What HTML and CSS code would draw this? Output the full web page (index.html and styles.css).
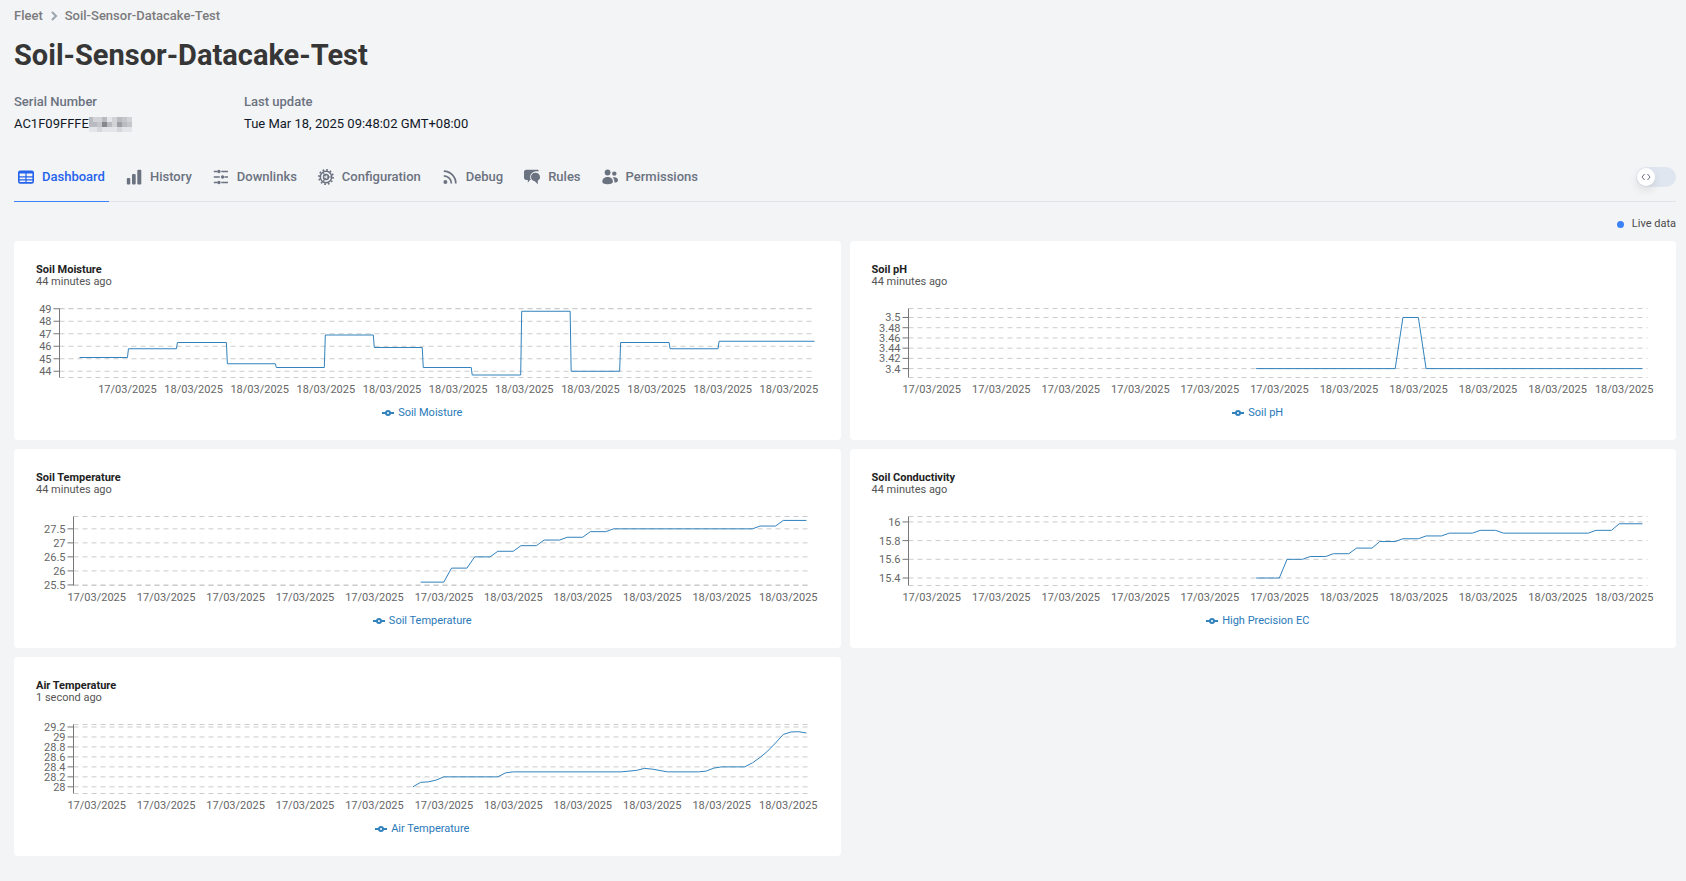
FILE: index.html
```html
<!DOCTYPE html>
<html lang="en">
<head>
<meta charset="utf-8">
<meta name="viewport" content="width=device-width, initial-scale=1">
<title>Soil-Sensor-Datacake-Test</title>
<link rel="stylesheet" href="styles.css">
</head>
<body>
<div class="page">
  <nav class="breadcrumb" aria-label="Breadcrumb">
    <a href="#">Fleet</a>
    <svg class="crumb-icon" viewBox="0 0 8 10" aria-hidden="true"><path d="M2 1l4 4-4 4"/></svg>
    <a href="#">Soil-Sensor-Datacake-Test</a>
  </nav>

  <h1 class="title">Soil-Sensor-Datacake-Test</h1>

  <dl class="meta">
    <div class="meta-item">
      <dt>Serial Number</dt>
      <dd>AC1F09FFFE<svg class="redacted" viewBox="0 0 43 15" shape-rendering="crispEdges" aria-hidden="true">
        <rect width="43" height="15" fill="#d2d3d7"/>
        <path fill="#b9bbc1" d="M0 0h4v10H0zM13 0h5v5h-5zM28 0h5v5h-5zM4 5h4v5H4zM18 5h5v5h-5zM33 5h5v5h-5z"/>
        <path fill="#c5c6cb" d="M8 5h5v5H8zM38 5h5v5h-5zM33 0h5v5h-5z"/>
        <path fill="#85888f" d="M13 5h5v5h-5z"/>
        <path fill="#9c9ea4" d="M28 5h5v5h-5z"/>
        <path fill="#e4e5e9" d="M0 10h43v5H0zM18 0h5v5h-5z"/>
        <path fill="#d6d7dc" d="M8 10h5v5H8zM28 10h5v5h-5z"/>
      </svg></dd>
    </div>
    <div class="meta-item">
      <dt>Last update</dt>
      <dd>Tue Mar 18, 2025 09:48:02 GMT+08:00</dd>
    </div>
  </dl>

  <div class="tabbar">
    <nav class="tabs" aria-label="Device sections">
      <a class="tab tab-active" href="#" aria-current="page">
        <svg viewBox="0 0 16 16" aria-hidden="true"><rect x=".8" y="2.300" width="14.400" height="11.600" rx="1.400" fill="none" stroke="currentColor" stroke-width="1.600"/><path d="M1 3h14v1.500H1z"/><path d="M8 4v9.500M1 7.800h14M1 10.900h14" fill="none" stroke="currentColor" stroke-width="1.200"/></svg>
        Dashboard</a>
      <a class="tab" href="#">
        <svg viewBox="0 0 16 16" aria-hidden="true"><rect x=".8" y="9" width="3.500" height="6.500" rx="1"/><rect x="6" y="5" width="3.700" height="10.500" rx="1"/><rect x="11.300" y=".8" width="4" height="14.700" rx="1"/></svg>
        History</a>
      <a class="tab" href="#">
        <svg viewBox="0 0 16 16" aria-hidden="true"><path d="M.8 2.500h3.500M8.300 2.500H15M.8 8h6M11.500 8H15M.8 13.500h3.500M8.300 13.500H15" fill="none" stroke="currentColor" stroke-width="1.300"/><circle cx="5.900" cy="2.500" r="1.700"/><circle cx="9.600" cy="8" r="1.700"/><circle cx="5.900" cy="13.500" r="1.700"/></svg>
        Downlinks</a>
      <a class="tab" href="#">
        <svg viewBox="0 0 16 16" aria-hidden="true"><g fill="none" stroke="currentColor"><circle cx="8" cy="8" r="5.700" stroke-width="1.500"/><circle cx="8" cy="8" r="7.100" stroke-width="1.700" stroke-dasharray="1.700 2.018"/><circle cx="8" cy="8" r="2.500" stroke-width="1.400"/><path d="M8.800 8h4.500M7.500 7.200L5.200 3.500M7.500 8.800l-2.300 3.700" stroke-width="1.100"/></g></svg>
        Configuration</a>
      <a class="tab" href="#">
        <svg viewBox="0 0 16 16" aria-hidden="true"><circle cx="3.400" cy="13" r="2"/><path d="M1.800 6.800a7.600 7.600 0 0 1 7.600 7.800M1.800 2.200a12.200 12.200 0 0 1 12 12.400" fill="none" stroke="currentColor" stroke-width="1.700"/></svg>
        Debug</a>
      <a class="tab" href="#">
        <svg viewBox="0 0 16 16" aria-hidden="true"><path d="M2.200.8h11c1 0 1.700.7 1.700 1.500C10 2 6.200 4 6.200 8c0 1.400.3 2.200.7 3H6l-2.200 2.800V11H2.200C1 11 0 10 0 8.800V3C0 1.800 1 .8 2.200.8z"/><path d="M11.300 3.700c2.900 0 4.700 1.800 4.700 4.200 0 1.700-.8 3-2.200 3.700v3.700L10.500 12C8.500 11.700 7 10.100 7 7.900c0-2.400 1.700-4.200 4.300-4.200z"/></svg>
        Rules</a>
      <a class="tab" href="#">
        <svg viewBox="0 0 16 16" aria-hidden="true"><circle cx="5.600" cy="3.500" r="2.900"/><circle cx="12.300" cy="4.600" r="2.200"/><path d="M.3 12.800C.3 9.500 2.600 8 5.600 8s5.300 1.500 5.300 4.800c0 1.600-1.600 2.500-5.300 2.500S.3 14.400.3 12.800z"/><path d="M10.700 8.600c.5-.3 1-.4 1.600-.4 2.200 0 3.700 1.200 3.700 3.200 0 1.300-1.300 2-3.600 2.100.2-2-.4-3.700-1.700-4.900z"/></svg>
        Permissions</a>
    </nav>
    <label class="switch">
      <input type="checkbox" role="switch" aria-label="Developer mode">
      <span class="knob"><svg viewBox="0 0 10 8" aria-hidden="true"><path d="M3.500 1L1 4l2.500 3M6.500 1L9 4 6.500 7"/></svg></span>
    </label>
  </div>

  <p class="live"><span class="live-dot"></span>Live data</p>

  <main class="grid" id="grid"></main>
</div>
<script src="charts.js"></script>
</body>
</html>
```
FILE: styles.css
```css
* { box-sizing: border-box; }

body {
  margin: 0;
  background: #f3f4f6;
  color: #111827;
  font-family: Roboto, "Liberation Sans", sans-serif;
  font-size: 13px;
  line-height: 16px;
}

a { color: inherit; text-decoration: none; }

.page { padding: 8px 10px 24px 14px; }

.breadcrumb {
  display: flex;
  align-items: center;
  gap: 7px;
  color: #7b7b7d;
  font-weight: 500;
}
.crumb-icon {
  width: 8px;
  height: 10px;
  fill: none;
  stroke: #9ca3af;
  stroke-width: 2;
}

.title {
  margin: 13px 0 21px;
  color: #363636;
  font-size: 29px;
  font-weight: 700;
  line-height: 36px;
}

.meta { display: flex; margin: 0; }
.meta-item { width: 230px; white-space: nowrap; }
.meta dt { color: #6b7280; font-weight: 500; }
.meta dd { display: flex; align-items: center; margin: 6px 0 0; }
.redacted { width: 43px; height: 15px; }

.tabbar {
  display: flex;
  align-items: center;
  justify-content: space-between;
  margin-top: 20px;
  border-bottom: 1px solid #e2e4e8;
}
.tabs { display: flex; gap: 13px; margin-bottom: -1px; }
.tab {
  display: flex;
  align-items: center;
  gap: 8px;
  padding: 17px 4px 16px;
  border-bottom: 1px solid transparent;
  color: #6b7280;
  font-weight: 500;
}
.tab svg { width: 16px; height: 16px; fill: currentColor; }
.tab-active { border-bottom-color: #3b82f6; color: #2563eb; }

.switch {
  position: relative;
  width: 40px;
  height: 20px;
  padding: 1px;
  border-radius: 10px;
  background: #e0e6ef;
}
.switch input {
  position: absolute;
  inset: 0;
  width: 100%;
  height: 100%;
  margin: 0;
  opacity: 0;
}
.knob {
  display: flex;
  align-items: center;
  justify-content: center;
  width: 18px;
  height: 18px;
  border-radius: 50%;
  background: #fff;
  box-shadow: 0 4px 10px rgba(0, 0, 0, .1);
}
.knob svg { width: 10px; height: 8px; fill: none; stroke: #6b7280; }
.switch input:checked + .knob { margin-left: 20px; }

.live {
  display: flex;
  align-items: center;
  justify-content: flex-end;
  gap: 8px;
  margin: 14px 0 9px;
  color: #4a4a4a;
  font-size: 11px;
}
.live-dot { width: 7px; height: 7px; border-radius: 50%; background: #3b82f6; }

.grid {
  display: grid;
  grid-template-columns: repeat(auto-fit, minmax(min(560px, 100%), 1fr));
  gap: 9px;
}
.card {
  min-width: 0;
  padding: 23px 22px 21px;
  border-radius: 4px;
  background: #fff;
  font-size: 11px;
  line-height: 12px;
}
.card h2 { margin: 0; color: #222; font-size: 11px; font-weight: 700; line-height: 12px; }
.card p { margin: 0 0 9px; color: #555; }

.chart { display: block; width: 100%; height: 110px; overflow: visible; }
.chart text { fill: #666; font-size: 11px; }
.grid-line { stroke: #ccc; stroke-dasharray: 5 4; }
.axis { stroke: #777; }
.series { fill: none; stroke: #3182bd; stroke-width: 1; }

.legend {
  display: flex;
  align-items: center;
  justify-content: center;
  gap: 4px;
  padding-right: 10px;
  color: #2a7ab9;
}
.legend svg { width: 12px; height: 12px; fill: none; stroke: #3182bd; stroke-width: 2; }
```
FILE: charts.js
```js
const NS = 'http://www.w3.org/2000/svg';
const TOP = 11.5;
const BOTTOM = 80.5;

const steps = (start, points) => points.map(([x, y]) => [start + x, y]);
const evening = { first: 0.0314, step: 0.0941, last: 0.9685, day17: 6 };

const charts = [
  {
    title: 'Soil Moisture', age: '44 minutes ago', legend: 'Soil Moisture',
    left: 23, right: 4, yMin: 43.5, yMax: 49.02, xMax: 755.5,
    ticks: [49, 48, 47, 46, 45, 44],
    dates: { first: 0.09, step: 0.0876, last: 0.966, day17: 1 },
    data: [[20, 45.1], [68, 45.1], [69, 45.8], [117, 45.8], [118, 46.3], [167, 46.3], [168, 44.6],
      [216, 44.6], [217, 44.3], [265, 44.3], [266, 46.9], [314, 46.9], [315, 45.9], [363, 45.9],
      [364, 44.3], [412, 44.3], [413, 43.7], [461.5, 43.7], [462.5, 48.8], [511, 48.8], [512, 44],
      [560.5, 44], [561.5, 46.3], [610, 46.3], [611, 45.8], [659, 45.8], [660, 46.4], [755.5, 46.4]]
  },
  {
    title: 'Soil pH', age: '44 minutes ago', legend: 'Soil pH',
    left: 36, right: 7, yMin: 3.3826, yMax: 3.5176, xMax: 95.66,
    ticks: [3.5, 3.48, 3.46, 3.44, 3.42, 3.4], dates: evening,
    data: steps(45, [[0, 3.4], [18, 3.4], [19, 3.5], [21, 3.5], [22, 3.4], [50, 3.4]])
  },
  {
    title: 'Soil Temperature', age: '44 minutes ago', legend: 'Soil Temperature',
    left: 37, right: 7, yMin: 25.48, yMax: 27.94, xMax: 95.66,
    ticks: [27.5, 27, 26.5, 26, 25.5], dates: evening,
    data: steps(45, [[0, 25.6], [3, 25.6], [4, 26.1], [6, 26.1], [7, 26.5], [9, 26.5], [10, 26.7],
      [12, 26.7], [13, 26.9], [15, 26.9], [16, 27.1], [18, 27.1], [19, 27.2], [21, 27.2], [22, 27.4],
      [24, 27.4], [25, 27.5], [43, 27.5], [44, 27.6], [46, 27.6], [47, 27.8], [50, 27.8]])
  },
  {
    title: 'Soil Conductivity', age: '44 minutes ago', legend: 'High Precision EC',
    left: 36, right: 7, yMin: 15.32, yMax: 16.058, xMax: 95.66,
    ticks: [16, 15.8, 15.6, 15.4], dates: evening,
    data: steps(45, [[0, 15.4], [3, 15.4], [4, 15.6], [6, 15.6], [7, 15.63], [9, 15.63], [10, 15.66],
      [12, 15.66], [13, 15.72], [15, 15.72], [16, 15.79], [18, 15.79], [19, 15.82], [21, 15.82],
      [22, 15.85], [24, 15.85], [25, 15.88], [28, 15.88], [29, 15.91], [31, 15.91], [32, 15.88],
      [43, 15.88], [44, 15.91], [46, 15.91], [47, 15.98], [50, 15.98]])
  },
  {
    title: 'Air Temperature', age: '1 second ago', legend: 'Air Temperature',
    left: 37, right: 7, yMin: 27.866, yMax: 29.25, xMax: 95.66,
    ticks: [29.2, 29, 28.8, 28.6, 28.4, 28.2, 28], dates: evening,
    data: [[44, 28], [45, 28.09], [46, 28.1], [47, 28.135], [48, 28.2], [55, 28.2], [56, 28.28],
      [57, 28.3], [71, 28.3], [73, 28.33], [74, 28.37], [75, 28.355], [77, 28.3], [81, 28.3],
      [82, 28.315], [83, 28.375], [84, 28.4], [87, 28.4], [88, 28.48], [89, 28.59], [90, 28.72],
      [91, 28.88], [92, 29.05], [93, 29.1], [94, 29.105], [95, 29.08]]
  }
];

function add(parent, name, attrs, text) {
  const el = document.createElementNS(NS, name);
  for (const key in attrs) el.setAttribute(key, attrs[key]);
  if (text !== undefined) el.textContent = text;
  parent.appendChild(el);
  return el;
}

function draw(svg, chart) {
  const width = svg.getBoundingClientRect().width;
  const x0 = chart.left + 0.5;
  const x1 = width - chart.right;
  const px = x => x0 + (x / chart.xMax) * (x1 - x0);
  const py = y => BOTTOM - ((y - chart.yMin) / (chart.yMax - chart.yMin)) * (BOTTOM - TOP);

  svg.replaceChildren();
  svg.setAttribute('viewBox', `0 0 ${width} 110`);

  for (const y of [TOP, ...chart.ticks.map(py), BOTTOM]) {
    add(svg, 'line', { class: 'grid-line', x1: x0, x2: x1, y1: y, y2: y });
  }
  add(svg, 'line', { class: 'axis', x1: x0, x2: x0, y1: TOP, y2: BOTTOM });
  for (const tick of chart.ticks) {
    add(svg, 'line', { class: 'axis', x1: x0 - 6, x2: x0, y1: py(tick), y2: py(tick) });
    add(svg, 'text', { x: x0 - 8, y: py(tick) + 4, 'text-anchor': 'end' }, tick);
  }
  for (let i = 0; i < 11; i++) {
    const { first, step, last, day17 } = chart.dates;
    const at = i === 10 ? last : first + i * step;
    const label = i < day17 ? '17/03/2025' : '18/03/2025';
    add(svg, 'text', { x: x0 + at * (x1 - x0), y: 96, 'text-anchor': 'middle' }, label);
  }
  add(svg, 'polyline', { class: 'series', points: chart.data.map(([x, y]) => `${px(x)},${py(y)}`).join(' ') });
}

const grid = document.getElementById('grid');
const drawn = charts.map(chart => {
  const card = document.createElement('section');
  card.className = 'card';
  card.innerHTML = `
    <h2>${chart.title}</h2>
    <p>${chart.age}</p>
    <svg class="chart" role="img" aria-label="${chart.title} over time"></svg>
    <div class="legend">
      <svg viewBox="0 0 12 12" aria-hidden="true"><path d="M0 6h4M8 6h4"/><circle cx="6" cy="6" r="2"/></svg>
      ${chart.legend}
    </div>`;
  grid.appendChild(card);
  return [card.querySelector('.chart'), chart];
});

const drawAll = () => drawn.forEach(([svg, chart]) => draw(svg, chart));
drawAll();
window.addEventListener('resize', drawAll);
```
